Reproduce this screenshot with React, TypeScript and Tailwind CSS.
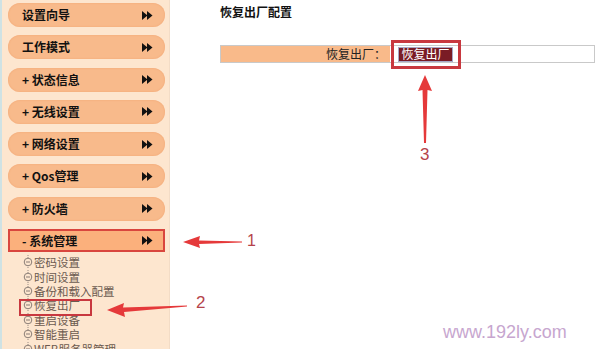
import React from 'react'

const menu = [
  { label: '设置向导' },
  { label: '工作模式' },
  { label: '+ 状态信息' },
  { label: '+ 无线设置' },
  { label: '+ 网络设置' },
  { label: '+ Qos管理' },
  { label: '+ 防火墙' },
]

const subItems = ['密码设置', '时间设置', '备份和载入配置', '恢复出厂', '重启设备', '智能重启', 'WEB服务器管理']

function DoubleArrow() {
  return (
    <svg width="11" height="9" viewBox="0 0 11 9">
      <polygon points="0,0 5.5,4.5 0,9" fill="#111" />
      <polygon points="5,0 10.5,4.5 5,9" fill="#111" />
    </svg>
  )
}

function TreeIcon({ last }: { last?: boolean }) {
  return (
    <svg width="10" height="14" viewBox="0 0 10 14" className="shrink-0">
      <line x1="5" y1="0" x2="5" y2={last ? 7 : 14} stroke="#9a8c84" strokeWidth="1" strokeDasharray="1 1" />
      <circle cx="5" cy="7" r="3.8" fill="#fde6cf" stroke="#8a7d76" strokeWidth="1" />
      <line x1="3" y1="7" x2="7" y2="7" stroke="#8a7d76" strokeWidth="1" />
    </svg>
  )
}

export default function App() {
  return (
    <div
      className="relative w-[600px] h-[349px] overflow-hidden bg-white flex"
      style={{ fontFamily: '"Noto Sans CJK SC", "Noto Sans", sans-serif' }}
    >
      {/* Sidebar */}
      <div className="w-[170px] h-full bg-[#fde6cf] border-l-2 border-l-[#cfe2e4] border-r border-r-[#f3dcc6] pt-[3px] flex flex-col">
        <div className="flex flex-col gap-[8.3px]">
          {menu.map((m) => (
            <div
              key={m.label}
              className="ml-[6px] w-[157px] h-6 rounded-full bg-[#f8ba8b] shadow-[inset_0_0_2px_#f0a470] flex items-center justify-between pl-[14px] pr-[12px]"
            >
              <span className="text-[12px] font-bold text-[#111] leading-none">{m.label}</span>
              <DoubleArrow />
            </div>
          ))}
          <div className="ml-[6px] w-[157px] h-[23px] bg-[#fbb07c] border-2 border-[#d9463e] flex items-center justify-between pl-[12px] pr-[10px]">
            <span className="text-[12px] font-bold text-[#111] leading-none">- 系统管理</span>
            <DoubleArrow />
          </div>
        </div>
        <div className="mt-[3px] pl-[21px] flex flex-col">
          {subItems.map((s, i) => (
            <div key={s} className="h-[14.4px] flex items-center gap-[1px]">
              <TreeIcon last={i === subItems.length - 1} />
              <span className="text-[11.5px] text-[#6b5a50] leading-[12px] whitespace-nowrap">{s}</span>
            </div>
          ))}
        </div>
      </div>

      {/* Content */}
      <div className="flex-1 pl-[50px] pt-[4px]">
        <div className="text-[12px] font-bold text-[#111] leading-4">恢复出厂配置</div>
        <div className="mt-[25px] w-[375px] h-[18px] flex border border-[#c9c9c9]">
          <div className="w-[169px] bg-[#f9ba8a] flex items-center justify-end pr-[4px]">
            <span className="text-[12px] text-[#222] leading-none">恢复出厂：</span>
          </div>
          <div className="flex-1 flex items-center pl-[8px]">
            <button className="h-[15px] w-[55px] bg-[#7a1c25] border border-[#a8a8c8] text-white text-[12px] leading-none flex items-center justify-center">
              恢复出厂
            </button>
          </div>
        </div>
      </div>

      {/* Annotations */}
      <div className="absolute left-[391px] top-[40px] w-[70px] h-[29px] border-[3px] border-[#c8383f]" />
      <div className="absolute left-[19px] top-[299px] w-[73px] h-[17px] border-2 border-[#c8383f]" />

      <svg className="absolute left-0 top-0" width="600" height="349" viewBox="0 0 600 349">
        {/* arrow 3 */}
        <polygon points="425,75 432,91 427.5,90 426,143 424,143 422.5,90 418,91" fill="#e5393a" />
        {/* arrow 1 */}
        <polygon points="183,242 200,236 199,240.5 242,241.5 242,242.5 199,244 200,248" fill="#e5393a" />
        {/* arrow 2 */}
        <polygon points="107,310 124,303 123,307.5 187,305.5 187,306.5 124,312 125,317" fill="#e5393a" />
      </svg>

      <div className="absolute left-[420px] top-[146px] text-[17px] leading-none text-[#b5434a]" style={{ fontFamily: '"Liberation Sans", sans-serif' }}>3</div>
      <div className="absolute left-[247px] top-[233px] text-[16px] leading-none text-[#b5434a]" style={{ fontFamily: '"Liberation Sans", sans-serif' }}>1</div>
      <div className="absolute left-[196px] top-[294px] text-[17px] leading-none text-[#b5434a]" style={{ fontFamily: '"Liberation Sans", sans-serif' }}>2</div>

      <div className="absolute left-[443px] top-[323px] text-[18px] leading-none text-[#c7a6cf]" style={{ fontFamily: '"Liberation Sans", sans-serif' }}>www.192ly.com</div>
    </div>
  )
}
